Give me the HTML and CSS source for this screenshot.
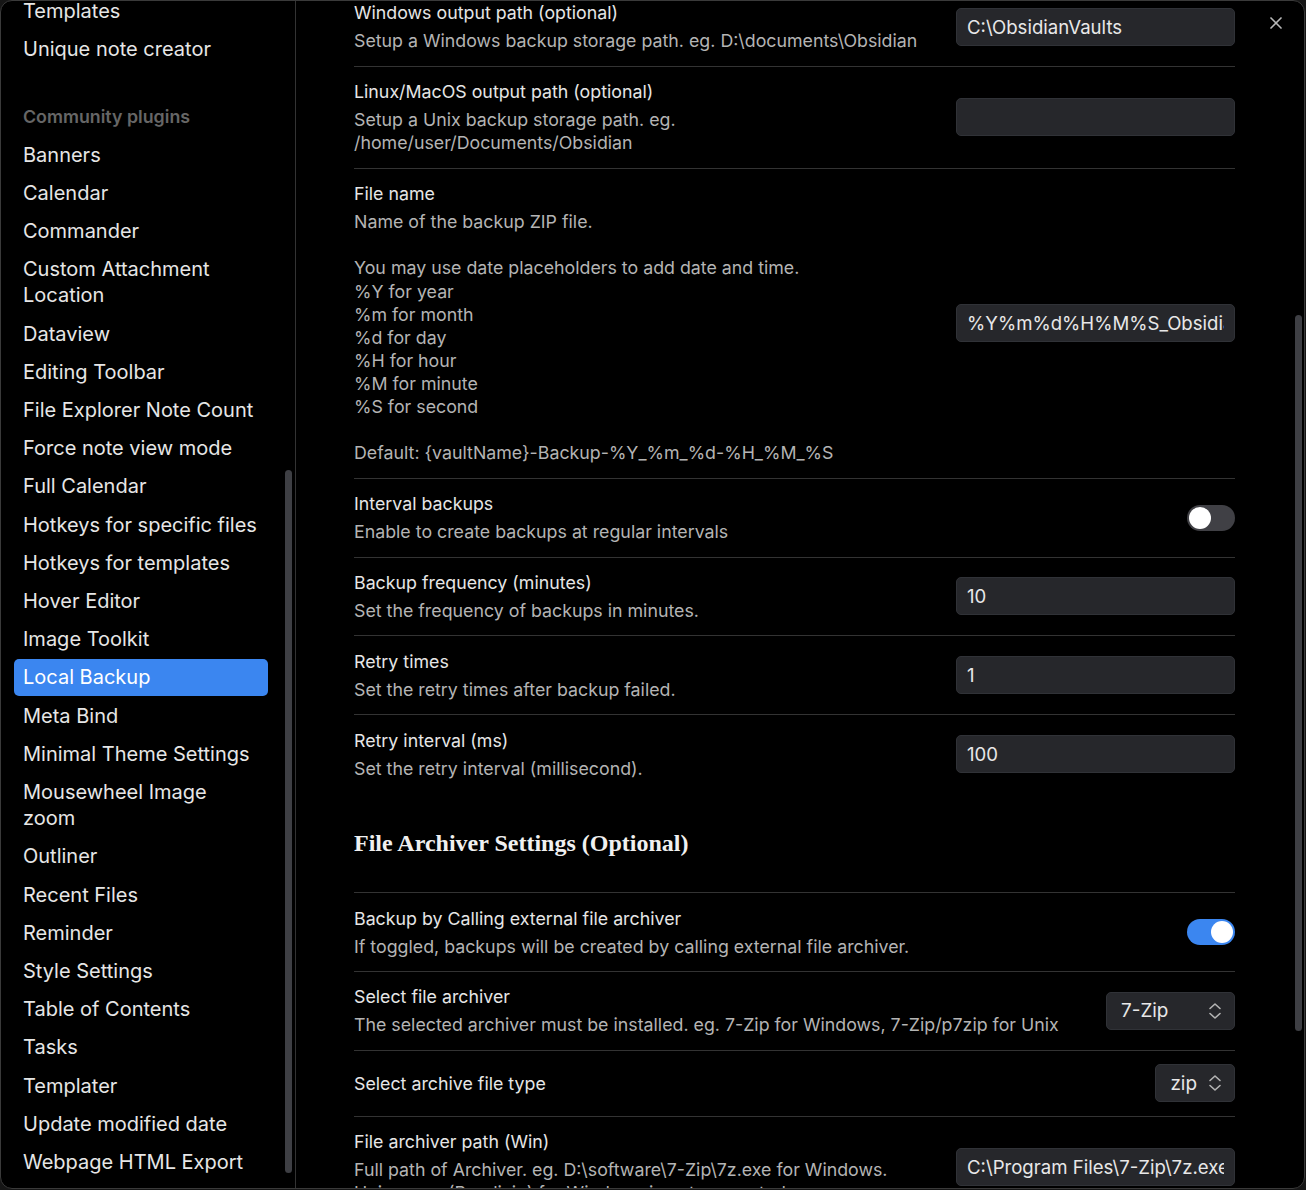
FILE: index.html
```html
<!DOCTYPE html>
<html>
<head>
<meta charset="utf-8">
<link rel="stylesheet" href="styles.css">
</head>
<body>
<div class="modal">
  <aside class="sidebar">
    <div class="nav">
      <div class="nav-item">Templates</div>
      <div class="nav-item">Unique note creator</div>
      <div class="nav-group-title">Community plugins</div>
      <div class="nav-item">Banners</div>
      <div class="nav-item">Calendar</div>
      <div class="nav-item">Commander</div>
      <div class="nav-item">Custom Attachment Location</div>
      <div class="nav-item">Dataview</div>
      <div class="nav-item">Editing Toolbar</div>
      <div class="nav-item">File Explorer Note Count</div>
      <div class="nav-item">Force note view mode</div>
      <div class="nav-item">Full Calendar</div>
      <div class="nav-item">Hotkeys for specific files</div>
      <div class="nav-item">Hotkeys for templates</div>
      <div class="nav-item">Hover Editor</div>
      <div class="nav-item">Image Toolkit</div>
      <div class="nav-item active">Local Backup</div>
      <div class="nav-item">Meta Bind</div>
      <div class="nav-item">Minimal Theme Settings</div>
      <div class="nav-item">Mousewheel Image zoom</div>
      <div class="nav-item">Outliner</div>
      <div class="nav-item">Recent Files</div>
      <div class="nav-item">Reminder</div>
      <div class="nav-item">Style Settings</div>
      <div class="nav-item">Table of Contents</div>
      <div class="nav-item">Tasks</div>
      <div class="nav-item">Templater</div>
      <div class="nav-item">Update modified date</div>
      <div class="nav-item">Webpage HTML Export</div>
    </div>
    <div class="thumb thumb-side"></div>
  </aside>
  <main class="content">
    <div class="settings">
      <div class="row">
        <div class="info">
          <div class="name">Windows output path (optional)</div>
          <div class="desc">Setup a Windows backup storage path. eg. D:\documents\Obsidian</div>
        </div>
        <div class="control"><div class="input"><span class="val">C:\ObsidianVaults</span></div></div>
      </div>
      <div class="row">
        <div class="info">
          <div class="name">Linux/MacOS output path (optional)</div>
          <div class="desc">Setup a Unix backup storage path. eg.<br>/home/user/Documents/Obsidian</div>
        </div>
        <div class="control"><div class="input"><span class="val"></span></div></div>
      </div>
      <div class="row">
        <div class="info">
          <div class="name">File name</div>
          <div class="desc">Name of the backup ZIP file.<br><br>You may use date placeholders to add date and time.<br>%Y for year<br>%m for month<br>%d for day<br>%H for hour<br>%M for minute<br>%S for second<br><br>Default: {vaultName}-Backup-%Y_%m_%d-%H_%M_%S</div>
        </div>
        <div class="control"><div class="input"><span class="val">%Y%m%d%H%M%S_Obsidian</span></div></div>
      </div>
      <div class="row">
        <div class="info">
          <div class="name">Interval backups</div>
          <div class="desc">Enable to create backups at regular intervals</div>
        </div>
        <div class="control"><div class="toggle"><span class="knob"></span></div></div>
      </div>
      <div class="row">
        <div class="info">
          <div class="name">Backup frequency (minutes)</div>
          <div class="desc">Set the frequency of backups in minutes.</div>
        </div>
        <div class="control"><div class="input"><span class="val">10</span></div></div>
      </div>
      <div class="row">
        <div class="info">
          <div class="name">Retry times</div>
          <div class="desc">Set the retry times after backup failed.</div>
        </div>
        <div class="control"><div class="input"><span class="val">1</span></div></div>
      </div>
      <div class="row">
        <div class="info">
          <div class="name">Retry interval (ms)</div>
          <div class="desc">Set the retry interval (millisecond).</div>
        </div>
        <div class="control"><div class="input"><span class="val">100</span></div></div>
      </div>
      <h2 class="heading">File Archiver Settings (Optional)</h2>
      <div class="row">
        <div class="info">
          <div class="name">Backup by Calling external file archiver</div>
          <div class="desc">If toggled, backups will be created by calling external file archiver.</div>
        </div>
        <div class="control"><div class="toggle on"><span class="knob"></span></div></div>
      </div>
      <div class="row">
        <div class="info">
          <div class="name">Select file archiver</div>
          <div class="desc">The selected archiver must be installed. eg. 7-Zip for Windows, 7-Zip/p7zip for Unix</div>
        </div>
        <div class="control">
          <div class="select select-wide"><span>7-Zip</span>
            <svg class="chev" viewBox="0 0 16 20" width="16" height="20"><path d="M3 7.5 8 3l5 4.5"/><path d="M3 12.5 8 17l5-4.5"/></svg>
          </div>
        </div>
      </div>
      <div class="row">
        <div class="info">
          <div class="name">Select archive file type</div>
        </div>
        <div class="control">
          <div class="select"><span>zip</span>
            <svg class="chev" viewBox="0 0 16 20" width="16" height="20"><path d="M3 7.5 8 3l5 4.5"/><path d="M3 12.5 8 17l5-4.5"/></svg>
          </div>
        </div>
      </div>
      <div class="row">
        <div class="info">
          <div class="name">File archiver path (Win)</div>
          <div class="desc">Full path of Archiver. eg. D:\software\7-Zip\7z.exe for Windows.<br>Unix users (Bandizip) for Windows is not supported.</div>
        </div>
        <div class="control"><div class="input"><span class="val">C:\Program Files\7-Zip\7z.exe</span></div></div>
      </div>
    </div>
    <div class="close">
      <svg viewBox="0 0 24 24" width="20" height="20"><path d="M18 6 6 18"/><path d="m6 6 12 12"/></svg>
    </div>
    <div class="thumb thumb-main"></div>
  </main>
</div>
</body>
</html>
```
FILE: styles.css
```css
html, body {
  margin: 0;
  padding: 0;
  background: #161616;
}
body {
  font-family: Inter, "Noto Sans", sans-serif;
  color: #dcdcdc;
}
.modal {
  box-sizing: border-box;
  width: 1305px;
  height: 1189px;
  border: 1px solid #3a3a3a;
  border-radius: 12px;
  background: #000;
  overflow: hidden;
  display: flex;
}
.sidebar {
  position: relative;
  box-sizing: border-box;
  width: 295px;
  flex: 0 0 295px;
  border-right: 1px solid #333;
  padding: 0 27px 0 13px;
  overflow: hidden;
}
.nav {
  margin-top: -8px;
  display: flex;
  flex-direction: column;
}
.nav-item {
  font-size: 20px;
  line-height: 26.2px;
  padding: 5px 9px;
  margin-bottom: 2px;
  border-radius: 5px;
  color: #e6e6e6;
}
.nav-item.active {
  background: #3b86f0;
  color: #fff;
}
.nav-group-title {
  font-size: 17.8px;
  line-height: 23.1px;
  font-weight: 600;
  color: #666;
  padding: 6px 9px 8px;
  margin-top: 30px;
}
.thumb {
  position: absolute;
  width: 7px;
  border-radius: 4px;
  background: #3e3f44;
}
.thumb-side {
  left: 284px;
  top: 469px;
  height: 703px;
}
.content {
  position: relative;
  flex: 1;
  overflow: hidden;
}
.settings {
  margin-top: -14px;
  padding: 0 69px 0 58px;
}
.row {
  display: flex;
  align-items: center;
  gap: 24px;
  border-top: 1px solid #333;
  padding: 13.4px 0;
}
.info {
  flex: 1;
  min-width: 0;
}
.name {
  font-size: 17.8px;
  line-height: 23.2px;
  color: #e6e6e6;
}
.desc {
  font-size: 17.8px;
  line-height: 23.1px;
  color: #b4b4b4;
  margin-top: 4.8px;
}
.control {
  display: flex;
  justify-content: flex-end;
}
.input {
  box-sizing: border-box;
  width: 279px;
  height: 38px;
  background: #26272b;
  border: 1px solid #303237;
  border-radius: 5px;
  padding: 0 10px;
  font-size: 18.6px;
  line-height: 36px;
  color: #e8e8e8;
}
.input .val {
  display: block;
  white-space: nowrap;
  overflow: hidden;
}
.toggle {
  width: 48px;
  height: 26px;
  border-radius: 13px;
  background: #404045;
  position: relative;
}
.toggle .knob {
  position: absolute;
  top: 2px;
  left: 2px;
  width: 22px;
  height: 22px;
  border-radius: 50%;
  background: #fff;
}
.toggle.on {
  background: #3b86f0;
}
.toggle.on .knob {
  left: 24px;
}
.select {
  box-sizing: border-box;
  height: 38px;
  background: #26272b;
  border: 1px solid #303237;
  border-radius: 5px;
  padding: 0 11px 0 14px;
  display: flex;
  align-items: center;
  justify-content: space-between;
  gap: 10px;
  font-size: 18.9px;
  color: #e8e8e8;
}
.select-wide {
  width: 129px;
}
.chev {
  fill: none;
  stroke: #b4b4b4;
  stroke-width: 1.6;
  stroke-linecap: round;
  stroke-linejoin: round;
}
.heading {
  font-family: "Liberation Serif", serif;
  font-weight: bold;
  font-size: 24px;
  line-height: 28px;
  margin: 36px 0 35px;
  color: #f0f0f0;
}
.close {
  position: absolute;
  top: 12px;
  right: 18px;
  width: 20px;
  height: 20px;
}
.close svg {
  fill: none;
  stroke: #b8b8b8;
  stroke-width: 2;
  stroke-linecap: round;
}
.thumb-main {
  right: 2px;
  top: 314px;
  height: 716px;
}
```
